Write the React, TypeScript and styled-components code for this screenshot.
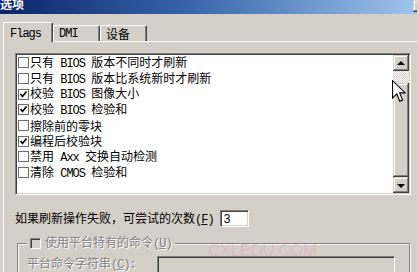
import React from "react";
import styled, { createGlobalStyle } from "styled-components";

const GlobalStyle = createGlobalStyle`
  html, body {
    margin: 0;
    padding: 0;
    background: #d4d0c8;
    overflow: hidden;
  }
  body {
    font-family: "Noto Sans CJK SC", "Liberation Sans", sans-serif;
    font-size: 12px;
    color: #000;
  }
`;

const flags = [
  { text: "只有 BIOS 版本不同时才刷新", checked: false },
  { text: "只有 BIOS 版本比系统新时才刷新", checked: false },
  { text: "校验 BIOS 图像大小", checked: true },
  { text: "校验 BIOS 检验和", checked: true },
  { text: "擦除前的零块", checked: false },
  { text: "编程后校验块", checked: true },
  { text: "禁用 Axx 交换自动检测", checked: false },
  { text: "清除 CMOS 检验和", checked: false },
];

// latin runs get the narrow mono face, like the old SimSun latin glyphs
function Mixed({ text }: { text: string }) {
  return (
    <>
      {text.split(/([A-Za-z ]+)/).map((part, i) =>
        /[A-Za-z ]/.test(part) ? <Lat key={i}>{part}</Lat> : <span key={i}>{part}</span>
      )}
    </>
  );
}

export default function App() {
  return (
    <>
      <GlobalStyle />
      <Window>
        <TitleBar>
          <TitleText>选项</TitleText>
          <CloseButton />
        </TitleBar>
        <Body>
          <TabStrip>
            <Tab $active>
              <Lat>Flags</Lat>
            </Tab>
            <Tab>
              <Lat>DMI</Lat>
            </Tab>
            <Tab>设备</Tab>
          </TabStrip>
          <Panel>
            <ListBox>
              <Items>
                {flags.map((f, i) => (
                  <Row key={i}>
                    <Box>
                      {f.checked && (
                        <svg width="9" height="9" viewBox="0 0 9 9">
                          <polyline
                            points="1.5,4 3.5,6.5 7.5,1.5"
                            fill="none"
                            stroke="#000"
                            strokeWidth="1.7"
                          />
                        </svg>
                      )}
                    </Box>
                    <RowText>
                      <Mixed text={f.text} />
                    </RowText>
                  </Row>
                ))}
              </Items>
              <ScrollBar>
                <ScrollButton>
                  <Arrow $dir="up" />
                </ScrollButton>
                <Track />
                <Thumb />
                <ScrollButton>
                  <Arrow $dir="down" />
                </ScrollButton>
              </ScrollBar>
              <Cursor width="14" height="23" viewBox="0 0 13 21">
                <path
                  d="M0.5 0.5 L0.5 16.5 L4.5 12.8 L7.2 19.6 L9.8 18.5 L7.1 11.8 L12.3 11.8 Z"
                  fill="#fff"
                  stroke="#000"
                  strokeWidth="1"
                  strokeLinejoin="miter"
                />
              </Cursor>
            </ListBox>

            <RetryRow>
              <span>
                如果刷新操作失败，可尝试的次数
                <Lat>
                  (<u>F</u>)
                </Lat>
              </span>
              <NumberField>3</NumberField>
            </RetryRow>

            <GroupBox>
              <Legend>
                <DisabledBox />
                <DisabledText>
                  使用平台特有的命令
                  <Lat>
                    (<u>U</u>)
                  </Lat>
                </DisabledText>
              </Legend>
              <CommandRow>
                <CommandLabel>
                  平台命令字符串
                  <Lat>
                    (<u>C</u>):
                  </Lat>
                </CommandLabel>
                <CommandField />
              </CommandRow>
            </GroupBox>
            <Watermark>CXLEDU.COM</Watermark>
          </Panel>
        </Body>
      </Window>
    </>
  );
}

const raised = `
  box-shadow: inset -1px -1px 0 #404040, inset 1px 1px 0 #d4d0c8,
    inset -2px -2px 0 #808080, inset 2px 2px 0 #ffffff;
`;

const Window = styled.div`
  width: 430px;
  height: 272px;
  display: flex;
  flex-direction: column;
  overflow: hidden;
  background: #d4d0c8;
`;
const TitleBar = styled.div`
  flex-shrink: 0;
  height: 14px;
  display: flex;
  align-items: flex-start;
  background: linear-gradient(90deg, #0a246a 0%, #3a66ac 45%, #a6caf0 100%);
  overflow: hidden;
`;
const TitleText = styled.div`
  margin-top: -3px;
  font-size: 12px;
  line-height: 13px;
  font-weight: 700;
  color: #fff;
`;
const CloseButton = styled.div`
  margin-left: auto;
  margin-right: 1px;
  width: 16px;
  height: 12px;
  background: #d4d0c8;
  ${raised}
`;
const Body = styled.div`
  flex: 1 0 auto;
  padding: 8px 0 0 3px;
  display: flex;
  flex-direction: column;
`;
const Lat = styled.span`
  font-family: "Liberation Mono", "DejaVu Sans Mono", monospace;
  font-size: 12px;
  letter-spacing: -1px;
`;
const TabStrip = styled.div`
  flex-shrink: 0;
  height: 19px;
  display: flex;
  align-items: flex-end;
`;
const Tab = styled.div<{ $active?: boolean }>`
  position: relative;
  z-index: ${(p) => (p.$active ? 1 : 0)};
  box-sizing: border-box;
  width: ${(p) => (p.$active ? 50 : 47)}px;
  height: ${(p) => (p.$active ? 20 : 16)}px;
  margin-bottom: ${(p) => (p.$active ? -1 : 0)}px;
  padding: ${(p) => (p.$active ? "2px 0 0 6px" : "0 0 0 5px")};
  display: flex;
  align-items: center;
  background: #d4d0c8;
  border-top: 1px solid #fff;
  border-left: 1px solid #fff;
  border-right: 1px solid #404040;
  box-shadow: inset -1px 0 0 #808080;
  border-radius: 2px 2px 0 0;
  line-height: 14px;
`;
const Panel = styled.div`
  position: relative;
  flex: 1;
  border-top: 1px solid #fff;
  border-left: 1px solid #fff;
  padding: 11px 0 0 11px;
`;
const ListBox = styled.div`
  position: relative;
  box-sizing: border-box;
  width: 396px;
  height: 142px;
  display: flex;
  background: #fff;
  border: 1px solid;
  border-color: #808080 #fff #fff #808080;
  box-shadow: inset 1px 1px 0 #404040, inset -1px -1px 0 #d4d0c8;
  padding: 1px;
`;
const Items = styled.div`
  flex: 1;
  padding-left: 1px;
`;
const Row = styled.div`
  height: 15.7px;
  display: flex;
  align-items: center;
`;
const Box = styled.div`
  box-sizing: border-box;
  width: 11px;
  height: 11px;
  border: 1px solid #6e6e6e;
  background: #fff;
  display: flex;
  align-items: center;
  justify-content: center;
`;
const RowText = styled.span`
  margin-left: 1px;
  white-space: nowrap;
  line-height: 14px;
`;
const ScrollBar = styled.div`
  width: 16px;
  display: flex;
  flex-direction: column;
`;
const ScrollButton = styled.div`
  height: 16px;
  background: #d4d0c8;
  display: flex;
  align-items: center;
  justify-content: center;
  ${raised}
`;
const Arrow = styled.div<{ $dir: "up" | "down" }>`
  width: 0;
  height: 0;
  border-left: 4px solid transparent;
  border-right: 4px solid transparent;
  ${(p) =>
    p.$dir === "up"
      ? "border-bottom: 4px solid #000; margin-top: -1px;"
      : "border-top: 4px solid #000; margin-top: 1px;"}
`;
const Track = styled.div`
  height: 12px;
  background: repeating-conic-gradient(#fff 0 25%, #d4d0c8 0 50%) 0 0 / 2px 2px;
`;
const Thumb = styled.div`
  flex: 1;
  background: #d4d0c8;
  ${raised}
`;
const Cursor = styled.svg`
  position: absolute;
  left: 376px;
  top: 26px;
`;
const RetryRow = styled.div`
  margin-top: 15px;
  height: 17px;
  display: flex;
  align-items: center;
  white-space: nowrap;
  line-height: 15px;
`;
const NumberField = styled.div`
  box-sizing: border-box;
  margin-left: 6px;
  width: 29px;
  height: 17px;
  padding: 1px 0 0 3px;
  background: #fff;
  border: 1px solid;
  border-color: #808080 #fff #fff #808080;
  box-shadow: inset 1px 1px 0 #404040, inset -1px -1px 0 #d4d0c8;
  font-family: "Liberation Sans", sans-serif;
  font-size: 12px;
  line-height: 14px;
`;
const GroupBox = styled.fieldset`
  box-sizing: border-box;
  width: 393px;
  min-width: 0;
  height: 60px;
  margin: 9px 0 0 2px;
  padding: 0 0 0 9px;
  border: 1px solid #808080;
  box-shadow: inset 1px 1px 0 #fff, 1px 1px 0 #fff;
`;
const Legend = styled.legend`
  display: flex;
  align-items: center;
  padding: 0 3px;
  height: 14px;
  background: #d4d0c8;
`;
const DisabledBox = styled.div`
  box-sizing: border-box;
  width: 11px;
  height: 11px;
  background: #d4d0c8;
  border: 1px solid;
  border-color: #808080 #fff #fff #808080;
  box-shadow: inset 1px 1px 0 #404040;
`;
const DisabledText = styled.span`
  margin-left: 4px;
  color: #808080;
  text-shadow: 1px 1px 0 #fff;
  white-space: nowrap;
  line-height: 14px;
`;
const CommandRow = styled.div`
  margin-top: 5px;
  display: flex;
  align-items: flex-start;
`;
const CommandLabel = styled(DisabledText)`
  margin-left: 0;
  width: 130px;
  line-height: 16px;
`;
const CommandField = styled.div`
  margin-top: 1px;
  width: 238px;
  height: 20px;
  box-sizing: border-box;
  background: #d4d0c8;
  border: 1px solid;
  border-color: #808080 #fff #fff #808080;
  box-shadow: inset 1px 1px 0 #404040;
`;
const Watermark = styled.div`
  position: absolute;
  left: 204px;
  top: 199px;
  font-family: "Liberation Sans", sans-serif;
  font-size: 17px;
  letter-spacing: -0.5px;
  color: rgba(232, 160, 200, 0.45);
  white-space: nowrap;
  pointer-events: none;
`;
